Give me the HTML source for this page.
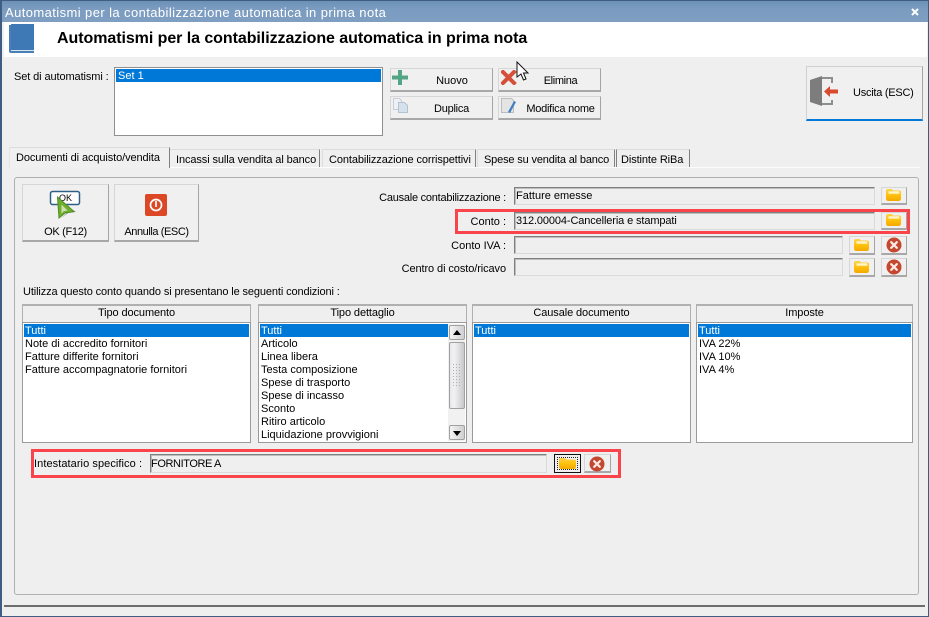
<!DOCTYPE html>
<html><head><meta charset="utf-8"><style>
html,body{margin:0;padding:0}
body{width:929px;height:617px;overflow:hidden;position:relative;background:#efefef;font:11px/13px "Liberation Sans",sans-serif;color:#000}
.a,.l,.b,.f,.h,.lb{position:absolute;box-sizing:border-box}
.l{white-space:nowrap}
.r{text-align:right}
.b{background:#f0f0f0;border:1px solid #d6d6d6;border-right:1px solid #a4a4a4;border-bottom:2px solid #a8a8a8;text-align:center;white-space:nowrap}
.b span{position:absolute;left:0;right:0;text-align:center;white-space:nowrap}
.f{background:#efefef;border:1px solid #dadada;border-top-color:#808080;border-left-color:#808080;box-shadow:inset 1px 1px 0 #bdbdbd;padding:2px 0 0 1px;white-space:nowrap;line-height:13px}
.h{background:#efefef;border:1px solid #b0b0b0;border-top-width:2px;padding-top:0;text-align:center;line-height:15px;letter-spacing:-.1px}
.lb{background:#fff;border:1px solid #9a9a9a;padding:1px;overflow:hidden}
.lb div{height:13px;line-height:15px;padding-left:1px;white-space:nowrap}
.lb .s{background:#0078d7;color:#fff}
.red{position:absolute;box-sizing:border-box;border:3px solid #f9444c}
svg{position:absolute;display:block}
.t{position:absolute;top:149px;height:18px;border-right:1px solid #808080;border-top:1px solid #dcdcdc;white-space:nowrap;box-sizing:border-box}
.t span{position:absolute;top:3px;letter-spacing:-.1px}
</style></head><body>
<svg width="0" height="0" style="position:absolute"><defs>
<linearGradient id="fo" x1="0" y1="0" x2="0" y2="1"><stop offset="0" stop-color="#ffd24a"/><stop offset=".5" stop-color="#ffc10d"/><stop offset="1" stop-color="#f2a900"/></linearGradient>
<g id="folder"><path d="M0 2.500Q0 0 2 0h3.500l1.500 1.500h6q2 0 2 2v6Q15 12 12.500 12h-10Q0 12 0 9.500z" fill="url(#fo)"/><path d="M2.500 2.200H13l.5 2.500H2.500z" fill="#fff4c8"/></g>
<g id="x"><circle cx="8" cy="8" r="7.500" fill="#c4472f"/><path d="M5.200 5.200l5.600 5.600M10.800 5.200l-5.600 5.600" stroke="#fbe9e4" stroke-width="2.200" stroke-linecap="round"/></g>
</defs></svg>

<!-- window frame -->
<div class="a" style="left:0;top:0;width:929px;height:22px;background:linear-gradient(#6b8fb5,#7b9cc0 40%,#7e9ec2)"></div>
<div class="a" style="left:0;top:0;width:929px;height:1px;background:#3f5e80"></div>
<div class="a" style="left:0;top:0;width:2px;height:617px;background:#3f5d80"></div>
<div class="a" style="left:928px;top:0;width:1px;height:617px;background:#3f5d80"></div>
<div class="a" style="left:0;top:616px;width:929px;height:1px;background:#3f5d80"></div>
<div class="l" style="left:5px;top:5px;font-size:13px;line-height:16px;color:#fff;letter-spacing:.41px">Automatismi per la contabilizzazione automatica in prima nota</div>
<svg style="left:910px;top:7px" width="10" height="10"><path d="M2 2l6 6M8 2l-6 6" stroke="#fff" stroke-width="2"/></svg>

<!-- header -->
<div class="a" style="left:4px;top:22px;width:923px;height:35px;background:#fff"></div>
<svg style="left:9px;top:24px" width="26" height="30"><path d="M0 1h2v26h23v2H2q-2 0-2-2z" fill="#4a7fb5"/><path d="M2 0h23v26H2z" fill="#3f79b5"/><path d="M2 26h23v1H2z" fill="#d8e6f2"/></svg>
<div class="l" style="left:57px;top:29px;font-size:16px;line-height:19px;font-weight:bold;letter-spacing:-.06px">Automatismi per la contabilizzazione automatica in prima nota</div>

<!-- set -->
<div class="l" style="left:14px;top:71px;letter-spacing:-.1px">Set di automatismi :</div>
<div class="lb" style="left:114px;top:67px;width:269px;height:69px;border-color:#8f8f8f"><div class="s" style="padding-left:2px">Set 1</div></div>

<div class="b" style="left:390px;top:68px;width:103px;height:24px"><span style="left:21px;top:6px">Nuovo</span></div>
<svg style="left:392px;top:70px" width="16" height="15"><path d="M6 0h4v5.500h6v4h-6V15H6V9.500H0v-4h6z" fill="#53a585"/></svg>
<div class="b" style="left:498px;top:68px;width:103px;height:24px"><span style="left:22px;top:6px;letter-spacing:-.35px">Elimina</span></div>
<svg style="left:501px;top:70px" width="16" height="15"><path d="M2 2l11 11M13 2L2 13" stroke="#d5503a" stroke-width="4" stroke-linecap="square"/></svg>
<div class="b" style="left:390px;top:96px;width:103px;height:24px"><span style="left:20px;top:6px;letter-spacing:-.25px">Duplica</span></div>
<svg style="left:393px;top:98px" width="16" height="16"><path d="M.5.500h6l2 2v9h-8z" fill="#eef1f4" stroke="#c8ced6"/><path d="M5.500 4.500h6l3 3v7h-9z" fill="#d5e2ee" stroke="#b3c2d1"/></svg>
<div class="b" style="left:498px;top:96px;width:103px;height:24px"><span style="left:22px;top:6px;letter-spacing:-.25px">Modifica nome</span></div>
<svg style="left:501px;top:98px" width="16" height="16"><path d="M.5.500h10l2 2v12H.500z" fill="#e4e4e4" stroke="#bcbcbc"/><path d="M7 14l6-11 2 1-6 11z" fill="#3f7fc0"/></svg>

<div class="b" style="left:806px;top:66px;width:117px;height:55px;border-bottom:2px solid #0078d7;border-top-color:#d0d0d0;border-left-color:#d0d0d0"><span style="left:46px;right:auto;top:20px;letter-spacing:-.25px">Uscita (ESC)</span></div>
<svg style="left:810px;top:75px" width="30" height="32"><path d="M0 5l12-4v30L0 27z" fill="#7d7d7d"/><path d="M12 3h10v5M22 25v4H12" fill="none" stroke="#8e8e8e" stroke-width="2"/><path d="M14 16.500l6-5.500v3.500h8v4h-8V22z" fill="#d9492e"/></svg>

<div class="a" style="left:9px;top:167px;width:911px;height:1px;background:#fcfcfc"></div>
<!-- tabs -->
<div class="a" style="left:9px;top:147px;width:161px;height:21px;background:#f0f0f0;border-left:1px solid #e4e4e4;border-right:1px solid #808080;border-top:1px solid #dcdcdc;box-sizing:border-box"></div>
<div class="l" style="left:16px;top:152px;letter-spacing:-.1px">Documenti di acquisto/vendita</div>
<div class="t" style="left:170px;width:150px"><span style="left:6px;top:4px">Incassi sulla vendita al banco</span></div>
<div class="t" style="left:322px;width:154px;border-left:1px solid #dcdcdc"><span style="left:6px;top:4px">Contabilizzazione corrispettivi</span></div>
<div class="t" style="left:477px;width:138px;border-left:1px solid #dcdcdc"><span style="left:6px;top:4px;letter-spacing:-.16px">Spese su vendita al banco</span></div>
<div class="t" style="left:616px;width:74px;border-left:1px solid #808080"><span style="left:4px;top:4px">Distinte RiBa</span></div>

<!-- panel -->
<div class="a" style="left:14px;top:177px;width:905px;height:418px;border:1px solid #b0b0b0;border-radius:3px"></div>
<div class="a" style="left:4px;top:605px;width:921px;height:2px;background:#6d6d6d"></div>

<!-- OK / Annulla -->
<div class="b" style="left:22px;top:184px;width:87px;height:58px"><span style="top:41px;letter-spacing:-.3px">OK (F12)</span></div>
<svg style="left:49px;top:190px" width="34" height="30"><rect x="1.500" y="1.500" width="29" height="13" rx="2" fill="#fff" stroke="#2e5f86" stroke-width="1.500"/><text x="10" y="11" font-family="Liberation Sans" font-size="9">OK</text><path d="M12 28l6-5 9 -1-3-2z" fill="#999"/><path d="M8.500 7L25 21.500l-9 1.500-6 5z" fill="#6fae2f" stroke="#4d8d1f"/><path d="M12.500 14.500l6 6-4 .800-2 2.500z" fill="#d2e0b0"/></svg>
<div class="b" style="left:114px;top:184px;width:85px;height:58px"><span style="top:41px;letter-spacing:-.42px">Annulla (ESC)</span></div>
<svg style="left:145px;top:194px" width="22" height="22"><rect width="22" height="22" rx="2" fill="#dc4826"/><circle cx="11" cy="11" r="5.500" fill="none" stroke="#fff" stroke-width="1.700"/><path d="M11 7v6" stroke="#fff" stroke-width="1.700"/></svg>

<!-- fields -->
<div class="l r" style="left:300px;width:206px;top:192px;letter-spacing:-.24px">Causale contabilizzazione :</div>
<div class="f" style="left:514px;top:187px;width:361px;height:18px">Fatture emesse</div>
<div class="b" style="left:881px;top:187px;width:26px;height:18px"></div>
<svg style="left:886px;top:189px" width="15" height="12"><use href="#folder"/></svg>

<div class="l r" style="left:400px;width:106px;top:216px">Conto :</div>
<div class="f" style="left:514px;top:212px;width:361px;height:18px;letter-spacing:-.12px">312.00004-Cancelleria e stampati</div>
<div class="b" style="left:881px;top:212px;width:26px;height:18px"></div>
<svg style="left:886px;top:214px" width="15" height="12"><use href="#folder"/></svg>

<div class="l r" style="left:400px;width:106px;top:240px">Conto IVA :</div>
<div class="f" style="left:514px;top:236px;width:329px;height:18px"></div>
<div class="b" style="left:849px;top:236px;width:26px;height:19px"></div>
<svg style="left:854px;top:239px" width="15" height="12"><use href="#folder"/></svg>
<div class="b" style="left:881px;top:236px;width:26px;height:19px"></div>
<svg style="left:886px;top:237px" width="16" height="16"><use href="#x"/></svg>

<div class="l r" style="left:340px;width:166px;top:263px;letter-spacing:-.09px">Centro di costo/ricavo</div>
<div class="f" style="left:514px;top:258px;width:329px;height:18px"></div>
<div class="b" style="left:849px;top:258px;width:26px;height:19px"></div>
<svg style="left:854px;top:261px" width="15" height="12"><use href="#folder"/></svg>
<div class="b" style="left:881px;top:258px;width:26px;height:19px"></div>
<svg style="left:886px;top:259px" width="16" height="16"><use href="#x"/></svg>

<div class="red" style="left:455px;top:209px;width:455px;height:25px"></div>

<div class="l" style="left:23px;top:286px;letter-spacing:-.12px">Utilizza questo conto quando si presentano le seguenti condizioni :</div>

<!-- lists -->
<div class="h" style="left:22px;top:304px;width:229px;height:19px">Tipo documento</div>
<div class="lb" style="left:22px;top:322px;width:229px;height:121px"><div class="s">Tutti</div><div>Note di accredito fornitori</div><div>Fatture differite fornitori</div><div>Fatture accompagnatorie fornitori</div></div>

<div class="h" style="left:258px;top:304px;width:209px;height:19px">Tipo dettaglio</div>
<div class="lb" style="left:258px;top:322px;width:209px;height:121px"><div class="s">Tutti</div><div>Articolo</div><div>Linea libera</div><div>Testa composizione</div><div>Spese di trasporto</div><div>Spese di incasso</div><div>Sconto</div><div>Ritiro articolo</div><div>Liquidazione provvigioni</div></div>
<div class="a" style="left:448px;top:324px;width:17px;height:117px;background:#f1f1f1"></div>
<div class="a" style="left:449px;top:325px;width:16px;height:15px;background:linear-gradient(90deg,#f4f4f4,#cfcfd2);border:1px solid #a0a0a0;border-radius:2px;box-sizing:border-box"></div>
<svg style="left:453px;top:330px" width="8" height="5"><path d="M4 0l4 5H0z" fill="#000"/></svg>
<div class="a" style="left:449px;top:342px;width:16px;height:67px;background:linear-gradient(90deg,#e8e8ea,#f2f2f3 30%,#c8c8cb);border:1px solid #a0a0a0;border-radius:2px;box-sizing:border-box"></div>
<div class="a" style="left:453px;top:364px;width:8px;height:22px;background:repeating-linear-gradient(#b0b0b0 0 1px,transparent 1px 3px);-webkit-mask:repeating-linear-gradient(90deg,#000 0 1px,transparent 1px 3px)"></div>
<div class="a" style="left:449px;top:425px;width:16px;height:15px;background:linear-gradient(90deg,#f4f4f4,#cfcfd2);border:1px solid #a0a0a0;border-radius:2px;box-sizing:border-box"></div>
<svg style="left:453px;top:431px" width="8" height="5"><path d="M4 5l4-5H0z" fill="#000"/></svg>

<div class="h" style="left:472px;top:304px;width:219px;height:19px">Causale documento</div>
<div class="lb" style="left:472px;top:322px;width:219px;height:121px"><div class="s">Tutti</div></div>

<div class="h" style="left:696px;top:304px;width:217px;height:19px">Imposte</div>
<div class="lb" style="left:696px;top:322px;width:217px;height:121px"><div class="s">Tutti</div><div>IVA 22%</div><div>IVA 10%</div><div>IVA 4%</div></div>

<!-- intestatario -->
<div class="red" style="left:31px;top:449px;width:590px;height:29px"></div>
<div class="l" style="left:34px;top:458px;letter-spacing:.07px">Intestatario specifico :</div>
<div class="f" style="left:150px;top:454px;width:397px;height:19px;padding:3px 0 0 0;letter-spacing:-.4px">FORNITORE A</div>
<div class="a" style="left:554px;top:454px;width:27px;height:19px;background:#f0f0f0;border:1px solid #111;box-sizing:border-box"><div class="a" style="left:2px;top:2px;right:2px;bottom:2px;border:1px dotted #222"></div></div>
<svg style="left:559px;top:458px" width="17" height="11"><path d="M0 2q0-2 2-2h4l1.500 1.500H15q2 0 2 2v5q0 2.500-2.500 2.500h-12Q0 11 0 8.500z" fill="url(#fo)"/></svg>
<div class="b" style="left:584px;top:454px;width:27px;height:19px"></div>
<svg style="left:589px;top:456px" width="16" height="16"><use href="#x"/></svg>

<!-- cursor -->
<svg style="left:516px;top:61px" width="14" height="21"><path d="M1 1v15l4-3 2.500 6 2.500-1-2.500-6H12z" fill="#fff" stroke="#111"/></svg>
</body></html>
